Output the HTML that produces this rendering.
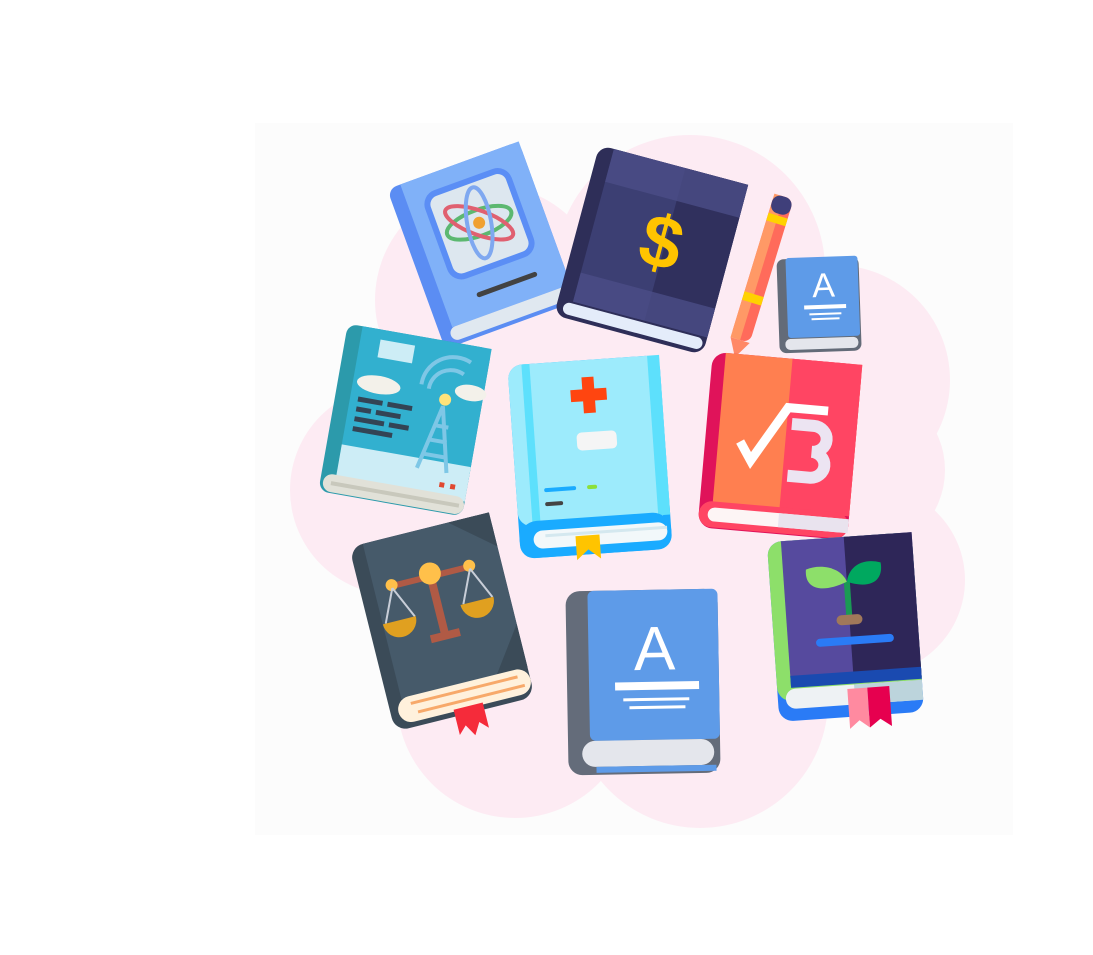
<!DOCTYPE html>
<html><head><meta charset="utf-8"><style>
html,body{margin:0;padding:0;background:#fff;width:1093px;height:955px;overflow:hidden}
svg{display:block}
</style></head><body>
<svg width="1093" height="955" viewBox="0 0 1093 955" xmlns="http://www.w3.org/2000/svg">
<rect x="255" y="123" width="758" height="712" fill="#fcfcfc"/>
<g fill="#fdebf3">
<circle cx="490" cy="300" r="115"/><circle cx="690" cy="270" r="135"/><circle cx="835" cy="380" r="115"/>
<circle cx="870" cy="580" r="95"/><circle cx="700" cy="700" r="128"/><circle cx="515" cy="700" r="118"/>
<circle cx="395" cy="490" r="105"/><circle cx="620" cy="480" r="220"/><circle cx="860" cy="470" r="85"/>
</g>

<!-- atom book -->
<g transform="translate(483,248) rotate(-20)">
<rect x="-70" y="-88" width="140" height="170" rx="10" fill="#5b8df3"/>
<rect x="-56" y="-88" width="126" height="152" fill="#80b1f8"/>
<rect x="-60" y="64" width="130" height="14" rx="7" fill="#e0e8f0"/>
<rect x="-38" y="-68" width="86" height="88" rx="12" fill="#dde7ef" stroke="#5b8ef5" stroke-width="6"/>
<ellipse cx="5" cy="-25" rx="34" ry="13" fill="none" stroke="#5cb870" stroke-width="4"/>
<ellipse cx="5" cy="-25" rx="36" ry="12" transform="rotate(40 5 -25)" fill="none" stroke="#e06070" stroke-width="4"/>
<ellipse cx="5" cy="-25" rx="12" ry="36" transform="rotate(10 5 -25)" fill="none" stroke="#7fa8f0" stroke-width="4"/>
<circle cx="5" cy="-25" r="6" fill="#f0a030"/>
<rect x="-22" y="40" width="64" height="5" rx="2.5" fill="#424242"/>
</g>

<!-- dollar book -->
<g transform="translate(651,250) rotate(15)">
<rect x="-77" y="-88" width="154" height="176" rx="12" fill="#2e2e58"/>
<rect x="-62" y="-88" width="139" height="158" fill="#3c3f73"/>
<rect x="12" y="-88" width="65" height="158" fill="#30305d"/>
<rect x="-62" y="-88" width="139" height="34" fill="#4b4d87" opacity="0.8"/>
<rect x="-62" y="40" width="139" height="30" fill="#4b4d87" opacity="0.8"/>
<rect x="-70" y="72" width="144" height="12" rx="6" fill="#e4ecfa"/>
<text x="8" y="15" font-family="Liberation Sans,sans-serif" font-weight="bold" font-size="74" fill="#ffc400" text-anchor="middle">$</text>
</g>

<!-- pencil -->
<g transform="translate(760,275) rotate(17)">
<rect x="-10" y="-82" width="20" height="150" rx="8" fill="#ff6b5b"/>
<rect x="-10" y="-82" width="10" height="150" fill="#ff9966"/>
<rect x="-10" y="-82" width="20" height="18" rx="8" fill="#3f3f7a"/>
<rect x="-10" y="-62" width="20" height="8" fill="#ffd200"/>
<rect x="-10" y="20" width="20" height="9" fill="#ffd200"/>
<path d="M-10 68 L0 86 L10 68Z" fill="#ff8866"/>
</g>

<!-- small A book -->
<g transform="translate(819,303) rotate(-2)">
<rect x="-41" y="-45" width="82" height="94" rx="7" fill="#636b78"/>
<rect x="-32" y="-46" width="72" height="80" rx="3" fill="#5e9be8"/>
<rect x="-35" y="35" width="73" height="11" rx="5" fill="#e4e6ec"/>
<text x="5" y="-6" font-family="Liberation Sans,sans-serif" font-size="34" fill="#fff" text-anchor="middle">A</text>
<rect x="-15" y="2" width="42" height="4" fill="#fff"/>
<rect x="-10" y="10" width="32" height="2" fill="#fff"/>
<rect x="-8" y="15" width="28" height="2" fill="#fff"/>
</g>

<!-- teal book -->
<g transform="translate(405,420) rotate(10)">
<rect x="-73" y="-85" width="146" height="170" rx="10" fill="#2c9aab"/>
<rect x="-58" y="-85" width="131" height="135" fill="#32b0cf"/>
<rect x="-58" y="35" width="131" height="35" fill="#cdedf6"/>
<rect x="-70" y="66" width="143" height="18" rx="9" fill="#e1e1d8"/>
<rect x="-62" y="73" width="130" height="4" fill="#c8c8bc"/>
<rect x="-38" y="-75" width="35" height="18" fill="#cdedf6"/>
<ellipse cx="-32" cy="-30" rx="22" ry="9" fill="#f3f1ea"/>
<ellipse cx="60" cy="-38" rx="16" ry="8" fill="#f3f1ea"/>
<g fill="#334455"><rect x="-50" y="-15" width="25" height="5"/><rect x="-20" y="-15" width="25" height="5"/><rect x="-50" y="-5" width="15" height="5"/><rect x="-30" y="-5" width="25" height="5"/><rect x="-50" y="5" width="30" height="5"/><rect x="-15" y="5" width="20" height="5"/><rect x="-50" y="15" width="40" height="5"/></g>
<path d="M20 45 L35 -20 L50 45 M27 15 L45 15 M24 30 L48 30 M30 0 L44 0" stroke="#7ec7e6" stroke-width="4" fill="none"/>
<circle cx="36" cy="-27" r="6" fill="#ffe37a"/>
<path d="M18 -35 A22 22 0 0 1 50 -55 M10 -38 A32 32 0 0 1 55 -68" stroke="#7ec7e6" stroke-width="4" fill="none"/>
<rect x="45" y="55" width="5" height="5" fill="#e04830"/><rect x="56" y="55" width="5" height="5" fill="#e04830"/>
</g>

<!-- medical book -->
<g transform="translate(590,457) rotate(-4)">
<rect x="-76" y="-97" width="152" height="194" rx="14" fill="#1aabff"/>
<rect x="-76" y="-97" width="152" height="162" rx="14" fill="#9debfc"/>
<rect x="-62" y="-97" width="8" height="160" fill="#5de0fc"/>
<rect x="64" y="-97" width="12" height="160" fill="#5de0fc"/>
<rect x="-76" y="60" width="152" height="37" rx="18" fill="#1aabff"/>
<rect x="-62" y="70" width="134" height="18" rx="9" fill="#f2f8fa"/>
<rect x="-50" y="74" width="122" height="3" fill="#d4e8ef"/>
<path d="M-20 78 h24 v24 l-12 -10 l-12 10z" fill="#ffc400"/>
<path d="M-3 -80 h12 v12 h12 v12 h-12 v12 h-12 v-12 h-12 v-12 h12z" fill="#ff4510"/>
<rect x="-12" y="-25" width="40" height="18" rx="5" fill="#f5f5f5"/>
<rect x="-48" y="28" width="32" height="4" rx="2" fill="#1aabff"/>
<rect x="-5" y="28" width="10" height="4" rx="2" fill="#8ce03a"/>
<rect x="-48" y="42" width="18" height="4" rx="2" fill="#444"/>
</g>

<!-- math book -->
<g transform="translate(780,445) rotate(5)">
<rect x="-75" y="-87" width="150" height="176" rx="14" fill="#e0135a"/>
<rect x="-62" y="-87" width="137" height="152" fill="#ff7f50"/>
<rect x="5" y="-87" width="70" height="152" fill="#ff4563"/>
<rect x="-75" y="62" width="150" height="26" rx="13" fill="#ff4563"/>
<rect x="-66" y="68" width="140" height="14" rx="7" fill="#fdf5f5"/>
<rect x="5" y="68" width="70" height="14" fill="#e9e3ee"/>
<path d="M-40 0 L-28 18 L5 -38 L45 -38" stroke="#fff" stroke-width="9" fill="none"/>
<path d="M10 -22 h22 a14 13 0 0 1 0 26 a14 13 0 0 1 0 26 h-22" stroke="#ece4f2" stroke-width="12" fill="none"/>
</g>

<!-- law book -->
<g transform="translate(442,622) rotate(-14)">
<rect x="-72" y="-95" width="144" height="190" rx="14" fill="#3b4b58"/>
<rect x="-58" y="-95" width="130" height="160" fill="#465a6a"/>
<path d="M30 -95 L72 -95 L72 -60Z" fill="#3b4b58"/>
<path d="M72 20 L72 65 L40 65Z" fill="#3b4b58"/>
<rect x="-64" y="64" width="136" height="26" rx="13" fill="#fff1dc"/>
<rect x="-50" y="70" width="110" height="3" fill="#f7a96a"/><rect x="-45" y="80" width="110" height="3" fill="#f7a96a"/>
<path d="M-10 88 h30 v26 l-8 -8 l-7 12 l-7 -12 l-8 8z" fill="#f52b3a"/>
<rect x="-4" y="-50" width="8" height="62" fill="#b05a45"/>
<rect x="-15" y="10" width="30" height="8" fill="#b05a45"/>
<rect x="-40" y="-50" width="80" height="6" fill="#b05a45"/>
<circle cx="0" cy="-50" r="11" fill="#ffc04a"/>
<circle cx="-40" cy="-48" r="6" fill="#ffc04a"/><circle cx="40" cy="-48" r="6" fill="#ffc04a"/>
<path d="M-40 -45 L-55 -12 M-40 -45 L-25 -12 M40 -45 L25 -12 M40 -45 L55 -12" stroke="#c8ced8" stroke-width="2"/>
<path d="M-58 -12 h34 a17 17 0 0 1 -34 0z M22 -12 h34 a17 17 0 0 1 -34 0z" fill="#e0a020"/>
</g>

<!-- big A book -->
<g transform="translate(643,682) rotate(-1)">
<rect x="-76" y="-92" width="152" height="184" rx="14" fill="#646c7a"/>
<rect x="-54" y="-92" width="130" height="150" rx="6" fill="#5e9be8"/>
<rect x="-62" y="58" width="132" height="26" rx="13" fill="#e4e6ec"/>
<rect x="-48" y="84" width="120" height="6" fill="#5e9be8"/>
<text x="12" y="-12" font-family="Liberation Sans,sans-serif" font-size="62" fill="#fff" text-anchor="middle">A</text>
<rect x="-28" y="0" width="84" height="8" fill="#fff"/>
<rect x="-20" y="16" width="66" height="3" fill="#fff"/>
<rect x="-14" y="24" width="56" height="3" fill="#fff"/>
</g>

<!-- plant book -->
<g transform="translate(845,627) rotate(-4)">
<rect x="-72" y="-90" width="145" height="180" rx="14" fill="#2a7bf6"/>
<rect x="-72" y="-90" width="145" height="160" rx="14" fill="#8ddf6a"/>
<rect x="-58" y="-90" width="131" height="145" fill="#564a9e"/>
<rect x="5" y="-90" width="68" height="145" fill="#2e2658"/>
<rect x="-58" y="45" width="131" height="12" fill="#1a4ab0"/>
<rect x="-64" y="58" width="137" height="20" rx="10" fill="#eef2f4"/>
<rect x="5" y="58" width="68" height="20" fill="#bcd4dc"/>
<path d="M-2 62 h20 v40 l-10 -8 l-10 8z" fill="#ff8aa0"/>
<path d="M18 62 h22 v40 l-11 -8 l-11 8z" fill="#e6004f"/>
<rect x="2" y="-45" width="6" height="38" fill="#1a9a55"/>
<path d="M5 -45 C-20 -35 -38 -40 -35 -60 C-20 -65 0 -60 5 -45Z" fill="#8ddf6a"/>
<path d="M5 -45 C30 -35 42 -45 40 -62 C22 -68 8 -60 5 -45Z" fill="#00a85f"/>
<rect x="-8" y="-12" width="26" height="10" rx="5" fill="#a0785a"/>
<rect x="-30" y="10" width="78" height="8" rx="4" fill="#2a7bf6"/>
</g>
</svg>
</body></html>
